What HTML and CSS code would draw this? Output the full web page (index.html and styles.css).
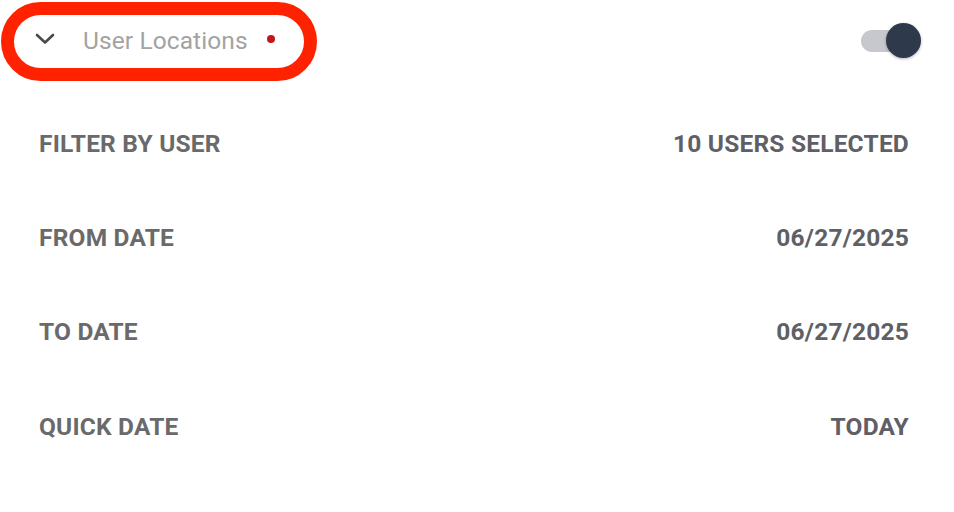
FILE: index.html
```html
<!DOCTYPE html>
<html>
<head>
<meta charset="utf-8">
<link rel="stylesheet" href="styles.css">
</head>
<body>
<div class="panel">
  <div class="header">
    <div class="title-wrap">
      <svg class="chevron" width="20" height="12" viewBox="0 0 20 12"><path d="M2 2 L10 9.5 L18 2" fill="none" stroke="#4a4a4a" stroke-width="2.6" stroke-linecap="round" stroke-linejoin="round"/></svg>
      <span class="title">User Locations</span>
      <span class="dot"></span>
      <div class="annotation"></div>
    </div>
    <div class="toggle"><div class="track"></div><div class="thumb"></div></div>
  </div>
  <div class="rows">
    <div class="row"><span class="label">FILTER BY USER</span><span class="value">10 USERS SELECTED</span></div>
    <div class="row"><span class="label">FROM DATE</span><span class="value">06/27/2025</span></div>
    <div class="row"><span class="label">TO DATE</span><span class="value">06/27/2025</span></div>
    <div class="row"><span class="label">QUICK DATE</span><span class="value">TODAY</span></div>
  </div>
</div>
</body>
</html>
```

FILE: styles.css
```css
html, body {
  margin: 0;
  padding: 0;
  background: #ffffff;
  font-family: Roboto, "Liberation Sans", sans-serif;
}
.panel {
  width: 954px;
  height: 512px;
  box-sizing: border-box;
  padding: 20px 32px 0 0;
}
.header {
  display: flex;
  align-items: center;
  justify-content: space-between;
  height: 40px;
}
.title-wrap {
  position: relative;
  display: flex;
  align-items: center;
  padding-left: 35px;
  height: 40px;
}
.chevron {
  display: block;
  margin-right: 28px;
  margin-top: -2px;
}
.title {
  font-size: 24.5px;
  color: #a3a3a3;
  font-weight: 400;
  letter-spacing: 0.1px;
}
.dot {
  width: 8px;
  height: 8px;
  border-radius: 50%;
  background: #c4161c;
  margin-left: 19px;
  margin-top: -2px;
}
.annotation {
  position: absolute;
  left: 1px;
  top: -18px;
  width: 316px;
  height: 79px;
  box-sizing: border-box;
  border: 13px solid #ff2200;
  border-radius: 40px;
}
.toggle {
  position: relative;
  width: 61px;
  height: 36px;
}
.track {
  position: absolute;
  left: 0;
  top: 8px;
  width: 44px;
  height: 22px;
  border-radius: 11px;
  background: #c6c8cd;
}
.thumb {
  position: absolute;
  left: 25px;
  top: 1px;
  width: 35px;
  height: 35px;
  border-radius: 50%;
  background: #2e3a4b;
  box-shadow: 0 1px 3px rgba(0,0,0,0.3);
}
.rows {
  display: flex;
  flex-direction: column;
  padding: 36px 45px 0 39px;
  margin-right: -32px;
}
.row {
  display: flex;
  justify-content: space-between;
  align-items: center;
  height: 94.3px;
}
.label, .value {
  font-size: 24.5px;
  font-weight: 700;
  color: #6a6a6a;
  letter-spacing: 0.2px;
}
.value {
  color: #5f6066;
}
```
